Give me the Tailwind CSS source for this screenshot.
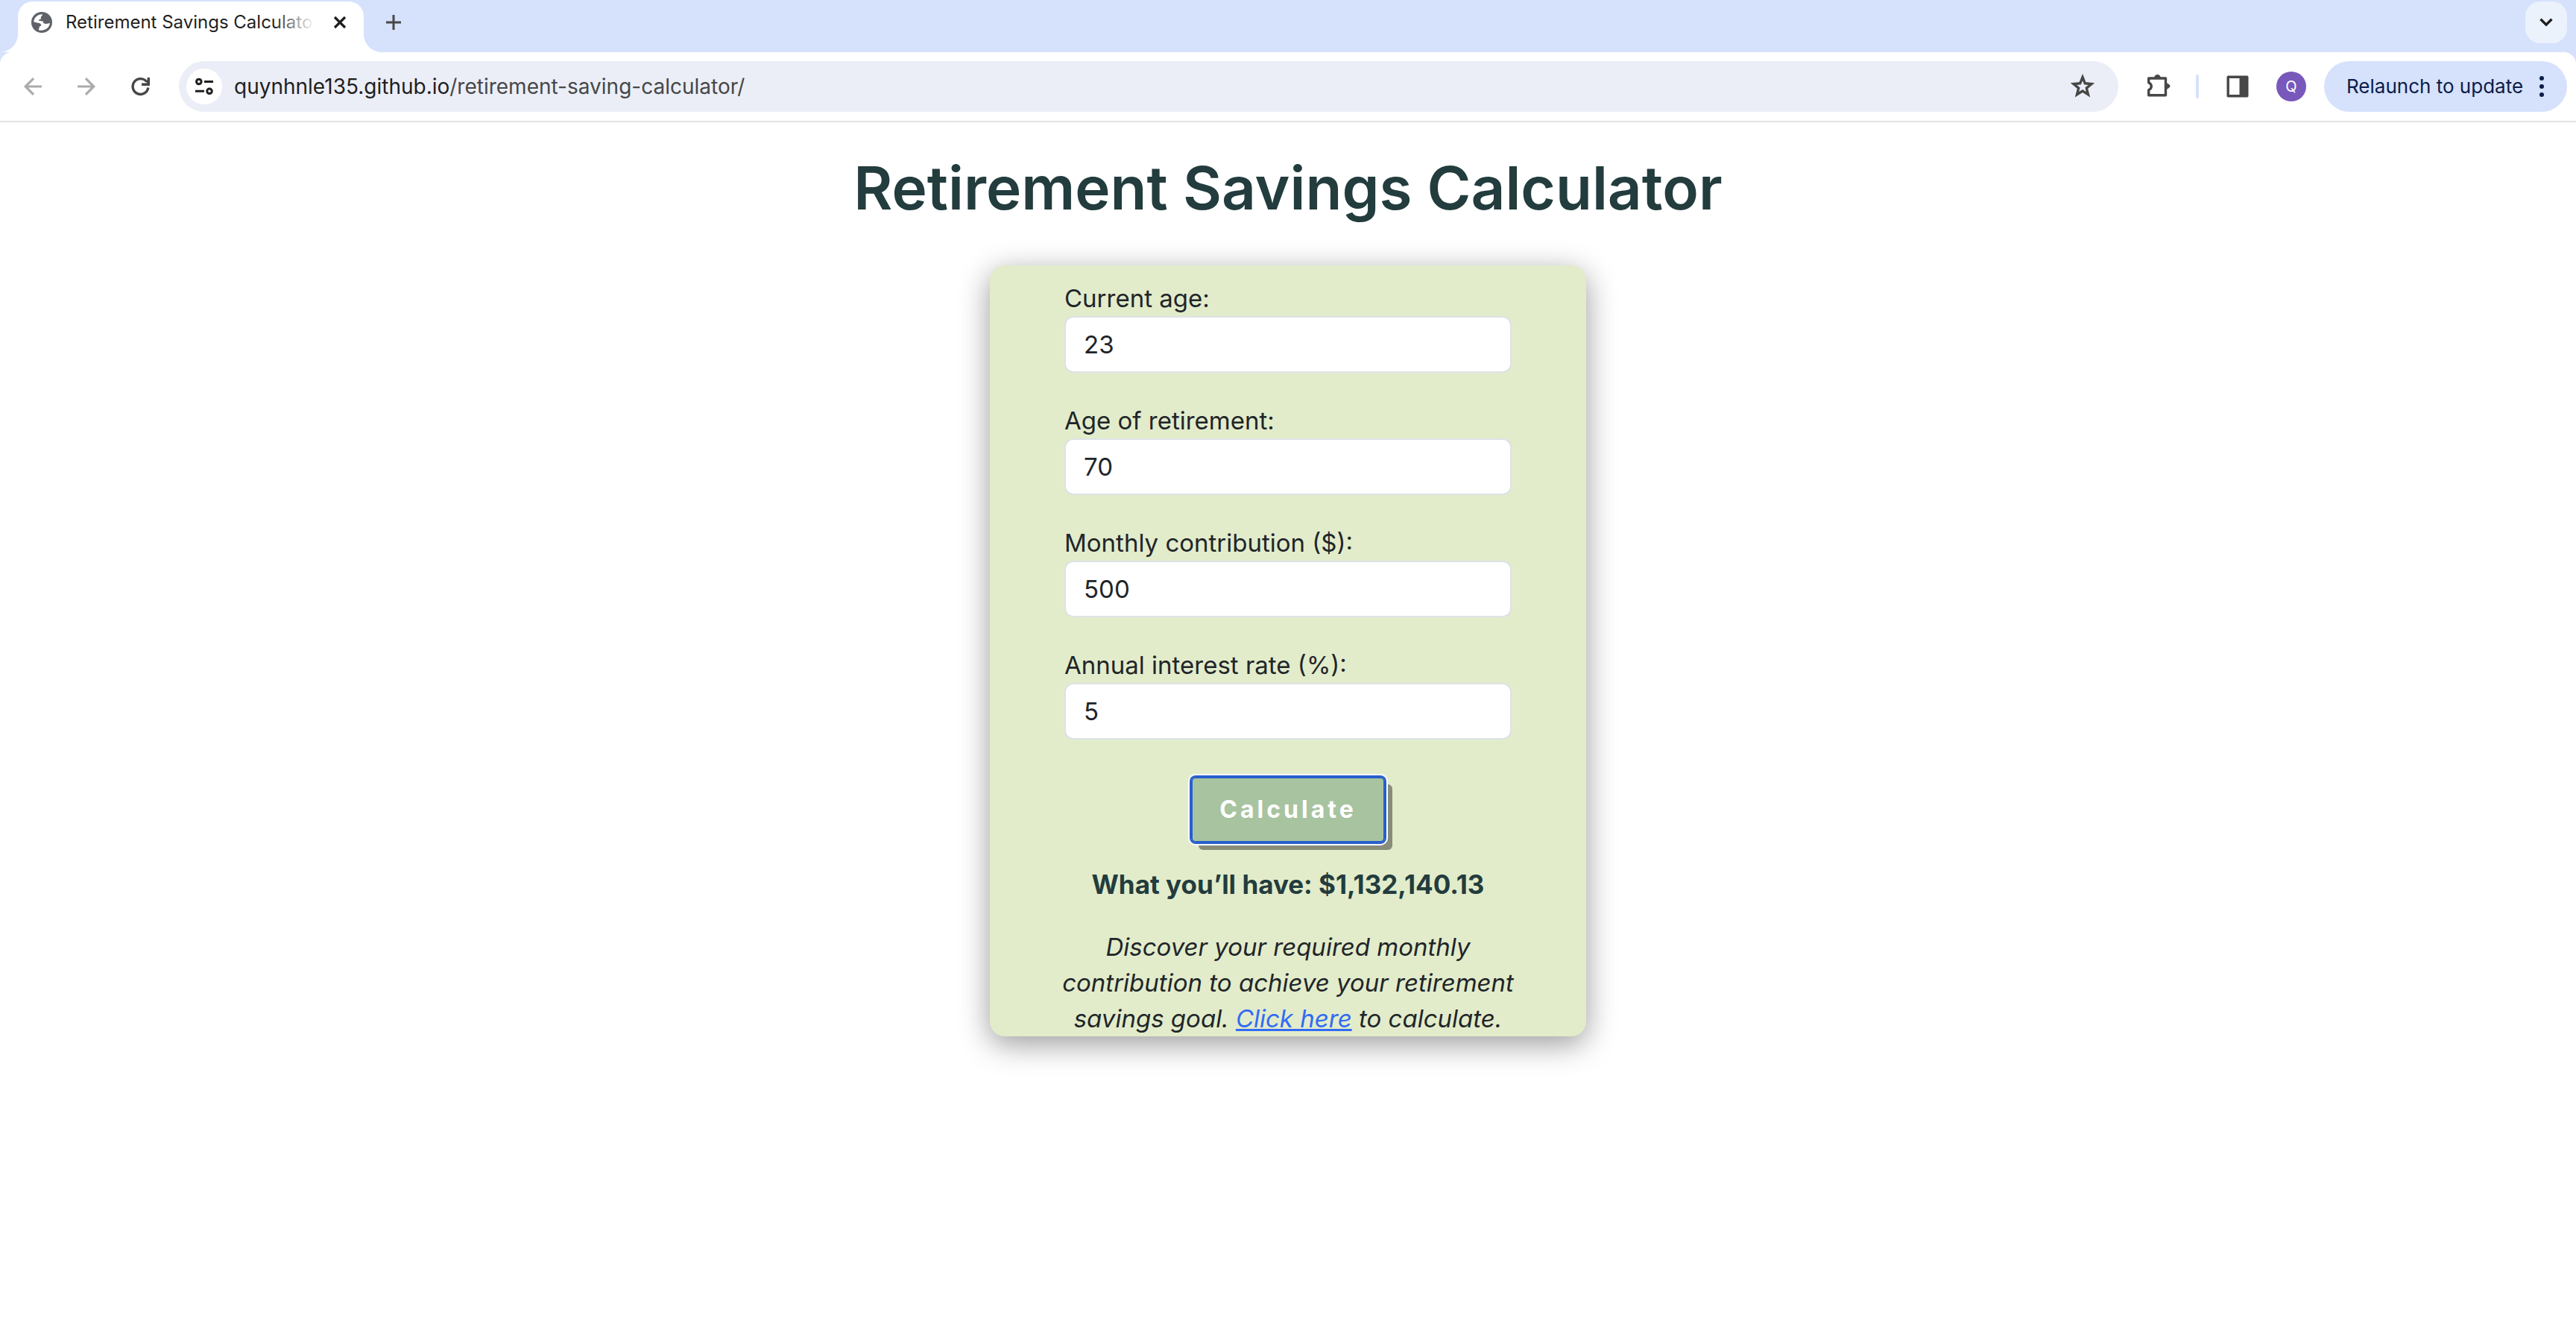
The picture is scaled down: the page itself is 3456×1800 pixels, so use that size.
<!DOCTYPE html>
<html lang="en">
<head>
<meta charset="utf-8">
<title>Retirement Savings Calculator</title>
<script src="https://cdn.jsdelivr.net/npm/@tailwindcss/browser@4"></script>
</head>
<body class="min-h-screen bg-white font-['Inter',sans-serif] text-[#212529]">

<!-- Browser window -->
<header class="bg-[#d6e1fc]">
  <!-- Tab strip -->
  <div class="flex h-[70px] items-end justify-between pr-3">
    <div class="flex items-end">
      <svg class="size-6" viewBox="0 0 24 24" fill="#fff" aria-hidden="true"><path d="M24 0v24H0C13 24 24 13 24 0z"/></svg>
      <div class="flex h-[68px] w-[464px] items-start rounded-t-[20px] bg-white pt-3 pr-5 pl-[18px]">
        <svg class="mt-[2px] size-7 shrink-0" viewBox="0 0 28 28" aria-hidden="true">
          <circle cx="14" cy="14" r="14" fill="#5f6368"/>
          <path d="M15.500 3.200C9 2.500 3.600 7.500 3.200 13.300L8.800 14.800C11.500 14.800 13.200 16 13.500 18.200L11.200 19.300 9.800 24.200C17 26.500 24.500 21.500 24.900 15L21.500 15.800C19.500 16.200 18.500 15.500 16.500 15.200L15.500 12.500 10.200 11.800C9.500 10.300 11 9.300 13 9.400L12.800 7.500C12.800 6 14.500 5 15.500 3.200Z" fill="#fff"/>
        </svg>
        <div class="relative ml-[18px] h-8 w-[334px] overflow-hidden text-2xl leading-8 whitespace-nowrap text-[#1f1f1f]">
          Retirement Savings Calculator
          <span class="absolute inset-y-0 right-0 w-14 bg-linear-to-r from-white/0 to-white"></span>
        </div>
        <button class="mt-[6px] ml-6 flex size-5 shrink-0 items-center justify-center" aria-label="Close tab">
          <svg class="size-5" viewBox="0 0 20 20" stroke="#1f1f1f" stroke-width="3.200" fill="none"><path d="M3 3l14 14M17 3L3 17"/></svg>
        </button>
      </div>
      <svg class="size-6" viewBox="0 0 24 24" fill="#fff" aria-hidden="true"><path d="M0 0v24h24C11 24 0 13 0 0z"/></svg>
      <button class="mb-[26px] ml-[2px] flex size-7 items-center justify-center" aria-label="New tab">
        <svg class="size-5" viewBox="0 0 20 20" stroke="#474747" stroke-width="3" fill="none"><path d="M10 0v20M0 10h20"/></svg>
      </button>
    </div>
    <button class="mb-3 flex size-14 items-center justify-center rounded-[20px] bg-[#ebf2fc]" aria-label="Search tabs">
      <svg class="h-3 w-[18px]" viewBox="0 0 18 12" stroke="#1f1f1f" stroke-width="3.400" fill="none"><path d="M1.500 1.800L9 9.200l7.500-7.400"/></svg>
    </button>
  </div>

  <!-- Toolbar -->
  <div class="flex h-[94px] items-center rounded-t-2xl border-b-2 border-[#e1e1e1] bg-white pr-3 pl-8">
    <button class="size-6" aria-label="Back">
      <svg class="size-6" viewBox="0 0 24 24" stroke="#ababab" stroke-width="3.200" fill="none"><path d="M24 12H2.500M13 1.200L2.200 12 13 22.800"/></svg>
    </button>
    <button class="ml-12 size-6" aria-label="Forward">
      <svg class="size-6" viewBox="0 0 24 24" stroke="#ababab" stroke-width="3.200" fill="none"><path d="M0 12h21.500M11 1.200L21.800 12 11 22.800"/></svg>
    </button>
    <button class="ml-12 size-[26px]" aria-label="Reload">
      <svg class="size-[26px]" viewBox="0 0 26 26" fill="none" stroke="#474747" stroke-width="3.400"><path d="M22.800 14.500A10.400 10.400 0 1 1 20.600 6.500"/><path d="M23.300 1v9.300H14" /><path d="M19 6l4 4V4z" fill="#474747" stroke="none"/></svg>
    </button>
    <div class="ml-[38px] flex h-[68px] flex-1 items-center rounded-full bg-[#ebeef7] pr-[30px] pl-[10px]">
      <button class="flex size-12 shrink-0 items-center justify-center rounded-full bg-white" aria-label="View site information">
        <svg class="size-6" viewBox="0 0 24 24" fill="none" stroke="#1f1f1f" stroke-width="3"><circle cx="4.800" cy="5.500" r="3.300"/><circle cx="19" cy="18.300" r="3.300"/><path d="M12 5.500h12M0 18.300h12"/></svg>
      </button>
      <a href="#" class="ml-4 text-[28px] leading-10 whitespace-nowrap text-[#474747]"><span class="text-[#1f1f1f]">quynhnle135.github.io</span>/retirement-saving-calculator/</a>
      <button class="ml-auto size-9 shrink-0" aria-label="Bookmark this tab">
        <svg class="size-9" viewBox="0 0 36 36" fill="none" stroke="#474747" stroke-width="3.400" stroke-linejoin="miter"><path d="M18 5.500l3.300 8.300 8.700.7-6.700 5.600 2.200 8.600L18 24l-7.500 4.700 2.200-8.600L6 14.500l8.700-.7z"/></svg>
      </button>
    </div>
    <button class="ml-9 size-9" aria-label="Extensions">
      <svg class="size-9" viewBox="0 0 36 36"><path d="M5 7H27.500V29.700H4.700V22.800C9.500 20.300 9.500 15.300 4.700 12.800V7Z" fill="none" stroke="#474747" stroke-width="3.400" stroke-linejoin="round"/><path d="M12.300 6.300a4.200 4.200 0 0 1 8.400 0zM28 13.100q5.500 2.200 5.500 4.400T28 22.300z" fill="#474747"/></svg>
    </button>
    <span class="ml-8 h-8 w-1 rounded-full bg-[#d6e1fc]"></span>
    <button class="ml-9 size-8" aria-label="Side panel">
      <svg class="size-8" viewBox="0 0 32 32"><path d="M3.200 3.200h25.600v25.600H3.200z" fill="none" stroke="#474747" stroke-width="3.400" stroke-linejoin="round"/><path d="M18.500 3h10.300v26H18.500z" fill="#474747"/></svg>
    </button>
    <button class="ml-9 size-10 rounded-full bg-[#7958bb] text-xl leading-10 text-white" aria-label="Profile Q">Q</button>
    <button class="ml-6 flex h-[68px] items-center rounded-full bg-[#d6e1fc] pr-[30px] pl-[30px] text-[26px] leading-10 whitespace-nowrap text-[#0b1d48]">
      <span class="w-[258px] text-left">Relaunch to update</span>
      <svg class="h-7 w-2" viewBox="0 0 8 28" fill="#0b1d48" aria-hidden="true"><circle cx="4" cy="3" r="3"/><circle cx="4" cy="14" r="3"/><circle cx="4" cy="25" r="3"/></svg>
    </button>
  </div>
</header>

<!-- Page -->
<main class="flex flex-col items-center pt-10">
  <h1 class="text-[80px] leading-[96px] font-semibold text-[#233c3d]">Retirement Savings Calculator</h1>

  <form class="mt-14 flex w-full max-w-[800px] flex-col items-center rounded-[20px] bg-[#e2eccb] px-20 pt-5 shadow-[0_10px_40px_rgb(0_0_0/0.4)]">
    <div class="grid w-[600px] gap-10 text-[33px] leading-[48px]">
      <div class="flex flex-col">
        <label for="age">Current age:</label>
        <input id="age" type="text" value="23" class="h-[76px] rounded-xl border-2 border-[#dee2e6] bg-white px-6">
      </div>
      <div class="flex flex-col">
        <label for="retire">Age of retirement:</label>
        <input id="retire" type="text" value="70" class="h-[76px] rounded-xl border-2 border-[#dee2e6] bg-white px-6">
      </div>
      <div class="flex flex-col">
        <label for="monthly">Monthly contribution ($):</label>
        <input id="monthly" type="text" value="500" class="h-[76px] rounded-xl border-2 border-[#dee2e6] bg-white px-6">
      </div>
      <div class="flex flex-col">
        <label for="rate">Annual interest rate (%):</label>
        <input id="rate" type="text" value="5" class="h-[76px] rounded-xl border-2 border-[#dee2e6] bg-white px-6">
      </div>
    </div>

    <button type="button" class="mt-[50px] h-[88px] w-[260px] rounded-md bg-[#a8c3a0] text-[32px] font-bold tracking-[4px] text-white shadow-[inset_0_0_0_2px_#285fcc,0_0_0_2px_#285fcc,0_0_0_4px_#fff,10px_10px_0_#888d7a]">Calculate</button>

    <h2 class="mt-[34px] text-[35px] leading-[44px] font-bold text-[#233c3d]">What you’ll have: $1,132,140.13</h2>

    <p class="mt-[38px] text-center text-[33px] leading-[48px] italic">Discover your required monthly contribution to achieve your retirement savings goal. <a href="#" class="text-[#326bf5] underline decoration-[3px] underline-offset-2">Click here</a> to calculate.</p>
  </form>
</main>
</body>
</html>
